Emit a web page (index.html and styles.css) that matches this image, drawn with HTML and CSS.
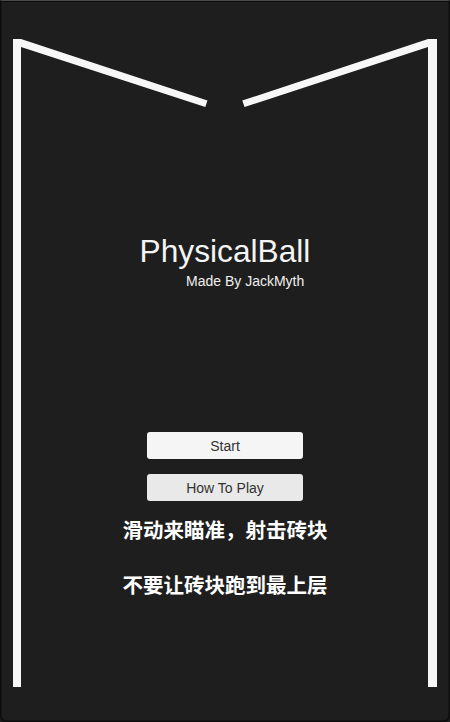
FILE: index.html
```html
<!DOCTYPE html>
<html lang="zh">
<head>
<meta charset="utf-8">
<title>PhysicalBall</title>
<link rel="stylesheet" href="styles.css">
</head>
<body>
<div class="screen">
  <svg class="walls" width="450" height="722" viewBox="0 0 450 722" aria-hidden="true">
    <polygon points="13,39 21,39 207.5,100.5 205.3,107.1 21,47 21,687 13,687" />
    <polygon points="428,39 437,39 437,687 428,687 428,47 244.5,107.1 242.3,100.5" />
  </svg>
  <div class="content">
    <h1 class="title">PhysicalBall</h1>
    <p class="subtitle">Made By JackMyth</p>
    <div class="buttons">
      <button class="btn btn-start">Start</button>
      <button class="btn btn-how">How To Play</button>
    </div>
    <p class="hint">滑动来瞄准，射击砖块</p>
    <p class="hint">不要让砖块跑到最上层</p>
  </div>
</div>
</body>
</html>
```

FILE: styles.css
```css
html, body {
  margin: 0;
  padding: 0;
  background: #1e1e1e;
}

.screen {
  position: relative;
  width: 450px;
  height: 722px;
  box-sizing: border-box;
  background: #1e1e1e;
  border: 1px solid #0c0c0c;
  border-top: 1px solid #4a4a4a;
  box-shadow: inset 0 1px 0 #0c0c0c, inset 1px 0 0 #151515, inset -1px 0 0 #151515, inset 0 -1px 0 #151515;
  border-radius: 0 0 6px 6px;
  overflow: hidden;
  font-family: "Liberation Sans", Arial, sans-serif;
}

.walls {
  position: absolute;
  left: -1px;
  top: -1px;
}

.walls polygon {
  fill: #f7f7f7;
}

.content {
  position: relative;
  padding-top: 232px;
  display: flex;
  flex-direction: column;
}

.title {
  margin: 0;
  font-weight: normal;
  font-size: 31.7px;
  line-height: 36px;
  color: #f4f4f4;
  text-align: center;
}

.subtitle {
  margin: 4px 0 0 185px;
  font-size: 14px;
  line-height: 16px;
  color: #f0f0f0;
}

.buttons {
  margin-top: 143px;
  display: flex;
  flex-direction: column;
  align-items: center;
  gap: 15px;
}

.btn {
  width: 156px;
  height: 27px;
  margin: 0;
  padding: 0;
  border: none;
  border-radius: 3px;
  font-family: "Liberation Sans", Arial, sans-serif;
  font-size: 14px;
  color: #323232;
  background: #f5f5f5;
}

.btn-how {
  background: #e9e9e9;
}

.hint {
  margin: 0;
  font-family: "Noto Sans CJK SC", sans-serif;
  font-weight: bold;
  font-size: 20.5px;
  line-height: 28px;
  color: #ffffff;
  text-align: center;
}

.buttons + .hint {
  margin-top: 14px;
}

.hint + .hint {
  margin-top: 27px;
}
```
